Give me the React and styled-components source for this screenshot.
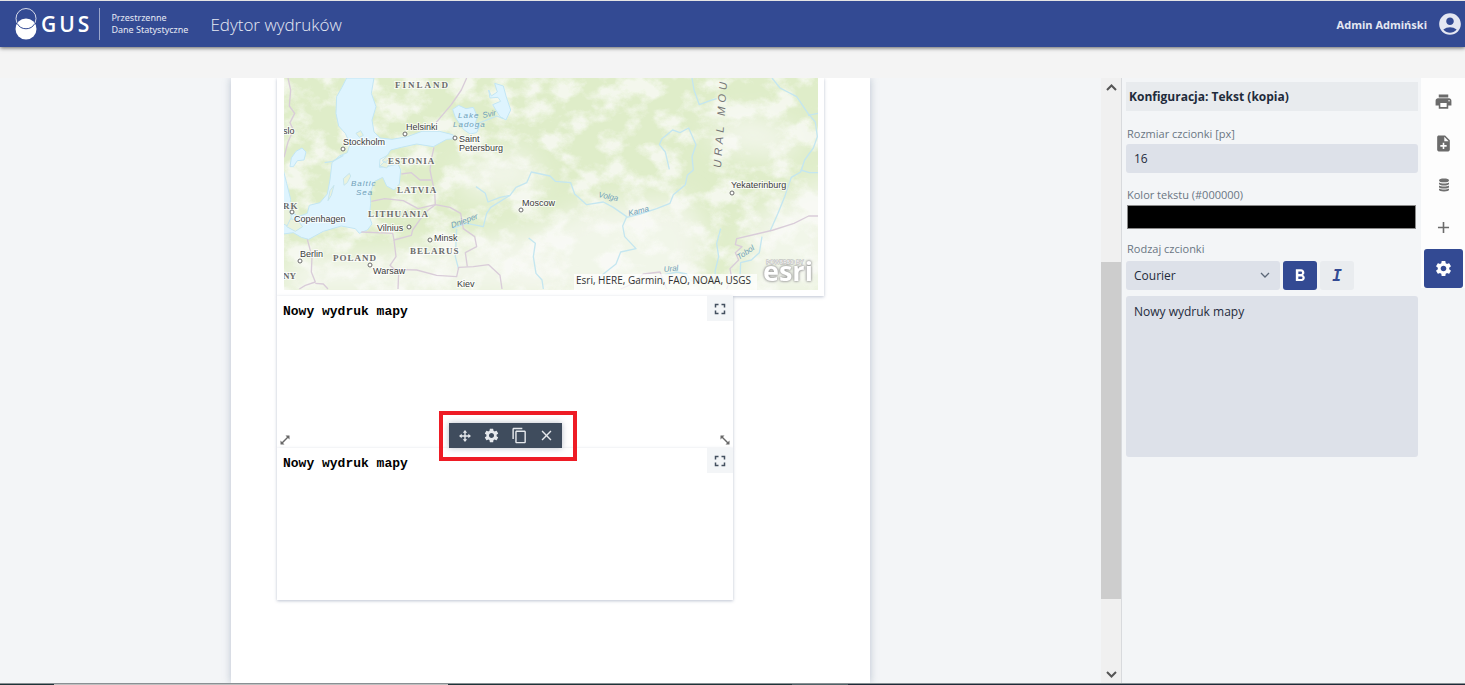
import { useState } from 'react';
import styled, { createGlobalStyle, css } from 'styled-components';
import {
	MdAccountCircle,
	MdAdd,
	MdClose,
	MdContentCopy,
	MdFormatBold,
	MdFormatItalic,
	MdFullscreen,
	MdNoteAdd,
	MdPrint,
	MdSettings,
} from 'react-icons/md';

const WATER = [
	// Gulf of Bothnia and the Baltic
	'M230 24 L216 52 L200 80 L198 130 L206 168 L226 190 L240 222 L232 248 L208 258 L186 278 L180 330 L172 372 L150 398 L118 406 L112 430 L84 440 L60 420 L62 388 L50 340 L40 300 L40 492 L70 488 L94 502 L116 508 L160 484 L214 468 L256 476 L268 490 L292 480 L306 462 L298 440 L302 400 L300 368 L314 334 L338 322 L350 348 L372 360 L388 342 L392 300 L384 282 L350 290 L328 292 L330 268 L352 256 L362 240 L394 232 L440 222 L490 230 L530 208 L556 206 L548 194 L508 184 L456 184 L412 200 L366 208 L330 204 L312 186 L306 150 L318 110 L304 70 L312 24 Z',
	// Ladoga
	'M548 118 L566 106 L588 116 L610 112 L622 140 L616 160 L630 166 L620 188 L600 192 L580 178 L556 142 Z',
	// Onega
	'M674 40 L700 48 L708 78 L722 120 L708 150 L690 140 L668 104 L692 94 L684 82 L660 84 L656 60 L664 78 L682 66 Z',
	'M60 290 L64 264 L78 244 L96 234 L108 246 L102 270 L82 272 L70 290 Z',
];

const LAND = [
	'M222 346 L220 326 L238 310 L242 318 L232 338 Z',
	'M174 392 L180 362 L192 346 L184 376 Z',
	'M40 400 L56 404 L64 440 L58 470 L40 462 Z',
	'M50 470 L62 446 L84 452 L98 470 L76 484 Z',
	'M330 288 L342 276 L358 282 L350 294 Z',
	'M258 190 L272 182 L280 196 L268 202 Z',
	'M336 272 L350 260 L358 268 L346 276 Z',
];

const RIVERS = [
	'M618 350 L646 370 L654 396 L690 382 L720 376 L738 352 L770 338 L784 306 L840 318 L856 334 L902 338 L914 372 L950 404 L1000 396 L1030 412 L1070 440 L1058 468 L1064 500 L1098 536 L1052 546 L1038 582 L1000 612 L980 640',
	'M1070 442 L1110 432 L1160 416 L1200 400 L1210 374 L1246 344 L1252 316 L1270 300 L1266 260 L1278 224 L1256 174 L1230 188 L1208 180 L1176 206 L1168 224 L1186 246 L1198 298',
	'M548 474 L590 460 L640 470 L650 430 L662 412 L720 376',
	'M560 476 L556 560 L566 598',
	'M620 162 L660 146 L680 138 L700 146',
	'M776 504 L796 520 L790 560 L798 610 L816 630 L820 657',
	'M1266 24 L1272 60 L1288 104 L1320 92 L1340 86',
	'M1506 24 L1530 54 L1580 80 L1614 130 L1636 156 L1642 200 L1630 234 L1604 270 L1592 306 L1564 322 L1544 380 L1524 430 L1500 484',
	'M1614 136 L1644 130',
	'M1592 300 L1618 308 L1644 308',
	'M1476 500 L1468 548 L1444 570 L1412 578 L1410 620',
	'M1352 476 L1340 520 L1346 560 L1336 600 L1334 657',
	'M1184 614 L1220 606 L1250 612 L1260 630 L1290 640',
	'M164 278 L188 274 L220 256',
];

const BORDERS = [
	'M54 24 L62 60 L58 108 L74 130 L60 158 L70 180 L54 216 L42 262',
	'M590 24 L574 60 L544 104 L498 158',
	'M492 232 L484 268 L480 300 L486 330 L494 366 L496 404',
	'M394 312 L424 308 L450 330 L484 330',
	'M304 394 L344 386 L400 392 L444 416 L496 404 L540 412 L572 430 L580 476 L614 500 L620 530 L586 548 L592 590',
	'M496 404 L470 424 L452 446 L428 480 L424 496 L372 510 L368 490 L274 486',
	'M372 510 L378 560 L360 586 L386 610 L384 657',
	'M364 598 L440 600 L500 616 L560 620 L566 592 L610 590 L656 584 L690 616 L696 657',
	'M112 508 L126 560 L124 606 L136 636 L106 646 L88 657',
	'M136 640 L160 642 L174 657',
	'M1644 438 L1616 438 L1572 460 L1510 480 L1460 492 L1400 506 L1396 524 L1416 530 L1396 548 L1406 570 L1380 596 L1384 620 L1370 657',
	'M1052 657 L1090 640 L1120 612 L1170 606 L1190 657',
];

const COUNTRIES = [
	{ x: 111, y: 10, name: 'FINLAND', spacing: 2 },
	{ x: 104, y: 86, name: 'ESTONIA', spacing: 1 },
	{ x: 113, y: 115, name: 'LATVIA', spacing: 1 },
	{ x: 84, y: 139, name: 'LITHUANIA', spacing: 1 },
	{ x: 126, y: 176, name: 'BELARUS', spacing: 1 },
	{ x: 49, y: 183, name: 'POLAND', spacing: 1 },
	{ x: -1, y: 131, name: 'RK', spacing: 1 },
	{ x: -1, y: 201, name: 'NY', spacing: 0 },
];

const CITIES = [
	{ x: 122, y: 52, cx: 121, cy: 56, name: 'Helsinki' },
	{ x: 59, y: 67, cx: 59, cy: 71, name: 'Stockholm' },
	{ x: 175, y: 64, cx: 171, cy: 60, name: 'Saint' },
	{ x: 175, y: 73, name: 'Petersburg' },
	{ x: -1, y: 56, name: 'slo' },
	{ x: 10, y: 144, cx: 8, cy: 134, name: 'Copenhagen' },
	{ x: 93, y: 153, cx: 125, cy: 149, name: 'Vilnius' },
	{ x: 150, y: 163, cx: 146, cy: 162, name: 'Minsk' },
	{ x: 16, y: 179, cx: 16, cy: 183, name: 'Berlin' },
	{ x: 89, y: 196, cx: 86, cy: 187, name: 'Warsaw' },
	{ x: 173, y: 209, name: 'Kiev' },
	{ x: 238, y: 128, cx: 237, cy: 132, name: 'Moscow' },
	{ x: 447, y: 110, cx: 448, cy: 115, name: 'Yekaterinburg' },
];

const WATERS = [
	{ x: 174, y: 40, name: 'Lake', spacing: 1 },
	{ x: 169, y: 49, name: 'Ladoga', spacing: 1 },
	{ x: 199, y: 40, name: 'Svir', angle: -12 },
	{ x: 67, y: 108, name: 'Baltic', spacing: 1 },
	{ x: 72, y: 117, name: 'Sea', spacing: 1 },
	{ x: 168, y: 150, name: 'Dnieper', angle: -20 },
	{ x: 314, y: 119, name: 'Volga', angle: 12 },
	{ x: 345, y: 138, name: 'Kama', angle: -14 },
	{ x: 380, y: 194, name: 'Ural', angle: -6 },
	{ x: 455, y: 182, name: 'Tobol', angle: -34 },
];

const MapView = () => (
	<MapSvg viewBox='0 0 534 212' preserveAspectRatio='xMidYMid slice' role='img' aria-label='Mapa'>
		<defs>
			<filter id='terrain' x='0' y='0' width='100%' height='100%'>
				<feTurbulence type='fractalNoise' baseFrequency='0.035 0.045' numOctaves='6' seed='21' />
				<feColorMatrix values='0 0 0 0 0.965  0 0 0 0 0.968  0 0 0 0 0.945  4 0 0 0 -1.75' />
			</filter>
			<filter id='soften' x='-20%' y='-20%' width='140%' height='140%'>
				<feGaussianBlur stdDeviation='12' />
			</filter>
		</defs>
		<rect width='534' height='212' fill='#dfedc9' />
		<g fill='#f6f7f1' fillOpacity='0.8' filter='url(#soften)'>
			<path d='M230 220 L250 150 L310 125 L400 120 L425 160 L405 220 Z' />
			<path d='M450 220 L470 140 L550 95 L550 220 Z' />
			<path d='M-10 220 L10 176 L100 175 L180 165 L240 150 L270 220 Z' />
			<path d='M420 50 L470 35 L520 60 L500 80 L440 72 Z' />
			<path d='M170 90 L240 70 L260 110 L190 120 Z' />
		</g>
		<rect width='534' height='212' filter='url(#terrain)' opacity='0.75' />
		<g transform='translate(-14 -8) scale(0.33333)' strokeLinejoin='round' fill='none'>
			{WATER.map(d => (
				<path key={d} d={d} fill='#def4fe' stroke='#c3e6f4' strokeWidth='3' />
			))}
			{LAND.map(d => (
				<path key={d} d={d} fill='#eaf2dc' stroke='#c6e5ee' strokeWidth='3' />
			))}
			{RIVERS.map(d => (
				<path key={d} d={d} stroke='#c4e6f0' strokeWidth='4' />
			))}
			{BORDERS.map(d => (
				<path key={d} d={d} stroke='#d9ccd9' strokeWidth='4' />
			))}
		</g>
		{COUNTRIES.map(({ name, x, y, spacing }) => (
			<CountryLabel key={name} x={x} y={y} $spacing={spacing}>
				{name}
			</CountryLabel>
		))}
		{WATERS.map(({ name, x, y, angle = 0, spacing = 0 }) => (
			<WaterLabel
				key={name}
				x={x}
				y={y}
				transform={`rotate(${angle} ${x} ${y})`}
				$spacing={spacing}
			>
				{name}
			</WaterLabel>
		))}
		{CITIES.map(({ name, x, y, cx, cy }) => (
			<g key={name}>
				{cx && <circle cx={cx} cy={cy} r='2' fill='#fff' stroke='#6b6b6b' />}
				<CityLabel x={x} y={y}>
					{name}
				</CityLabel>
			</g>
		))}
		<RangeLabel x='437' y='90' transform='rotate(-86 437 90)'>
			URAL MOU
		</RangeLabel>
		<rect x='290' y='196' width='183' height='16' fill='#fff' fillOpacity='0.7' />
		<Credits x='292' y='206'>
			Esri, HERE, Garmin, FAO, NOAA, USGS
		</Credits>
		<PoweredBy x='482' y='186'>
			POWERED BY
		</PoweredBy>
		<EsriLogo x='479' y='203'>
			esri
		</EsriLogo>
	</MapSvg>
);

const Logo = () => (
	<LogoSvg viewBox='0 0 22 32' aria-hidden='true'>
		<circle cx='11' cy='21' r='10.500' fill='#fff' />
		<circle cx='11' cy='10.500' r='10' fill='none' stroke='#fff' strokeWidth='.8' />
		<path d='M2.200 15.500A10 10 0 0 0 19.800 15.500' fill='none' stroke='#334a93' />
	</LogoSvg>
);

const MoveIcon = () => (
	<svg viewBox='0 0 14 14' width='14' height='14' fill='currentColor'>
		<path d='M6.300 3h1.400v8H6.300zM3 6.300h8v1.400H3z' />
		<path d='M7 1 9.200 3.700H4.800ZM7 13 9.200 10.300H4.800ZM1 7 3.700 4.800v4.400ZM13 7 10.300 4.800v4.400Z' />
	</svg>
);

const DatabaseIcon = () => (
	<svg viewBox='0 0 12 14' width='12' height='14' fill='#707070'>
		<path d='M1 2.4C1 1 3 .5 6 .5s5 .5 5 1.9S9 4.2 6 4.2 1 3.8 1 2.4Z' />
		<path d='M1 4.4c1 .8 3 1 5 1s4-.2 5-1v1.4C11 7 9 7.6 6 7.6S1 7 1 5.8Z' />
		<path d='M1 7.5c1 .8 3 1 5 1s4-.2 5-1v1.4c0 1.2-2 1.7-5 1.7S1 10.1 1 8.9Z' />
		<path d='M1 10.5c1 .8 3 1 5 1s4-.2 5-1v1.2c0 1.2-2 1.7-5 1.7s-5-.5-5-1.7Z' />
	</svg>
);

const ResizeIcon = ({ flip }) => (
	<svg viewBox='0 0 12 12' width='12' height='12' fill='#686868'>
		<path
			d='M1.500 6.500 3 8 8 3 6.500 1.500H10.500v4L9 4 4 9 5.500 10.500h-4Z'
			transform={flip ? 'matrix(-1 0 0 1 12 0)' : undefined}
		/>
	</svg>
);

const ScrollArrow = ({ down }) => (
	<svg viewBox='0 0 20 18' width='20' height='18' fill='none' stroke='#555' strokeWidth='2'>
		<path d={down ? 'M6 7l4.500 4.500L15 7' : 'M6 12l4.500-4.500L15 12'} />
	</svg>
);

const TextBlock = ({ text, bold, italic, children }) => (
	<TextCard>
		<CardText $bold={bold} $italic={italic}>
			{text}
		</CardText>
		<ExpandButton aria-label='Powiększ'>
			<MdFullscreen size={18} />
		</ExpandButton>
		{children}
	</TextCard>
);

const App = () => {
	const [config, setConfig] = useState({
		size: '16',
		color: '#000000',
		font: 'Courier',
		text: 'Nowy wydruk mapy',
	});
	const [bold, setBold] = useState(true);
	const [italic, setItalic] = useState(false);

	const onChange = e => {
		const { name, value } = e.target;
		setConfig({ ...config, [name]: value });
	};

	return (
		<Screen>
			<GlobalStyle />
			<Header>
				<Brand href='#'>
					<Logo />
					<BrandName>GUS</BrandName>
					<BrandText>
						Przestrzenne
						<br />
						Dane Statystyczne
					</BrandText>
				</Brand>
				<AppTitle>Edytor wydruków</AppTitle>
				<UserButton>
					Admin Admiński
					<MdAccountCircle size={26} />
				</UserButton>
			</Header>

			<Main>
				<Workspace>
					<Paper>
						<MapCard>
							<MapView />
						</MapCard>
						<TextBlock text='Nowy wydruk mapy' bold>
							<Handle $side='left' aria-label='Zmień rozmiar z lewej'>
								<ResizeIcon />
							</Handle>
							<Handle $side='right' aria-label='Zmień rozmiar z prawej'>
								<ResizeIcon flip />
							</Handle>
							<Highlight>
								<Toolbar>
									<ToolButton aria-label='Przesuń'>
										<MoveIcon />
									</ToolButton>
									<ToolButton aria-label='Konfiguracja'>
										<MdSettings size={17} />
									</ToolButton>
									<ToolButton aria-label='Kopiuj'>
										<MdContentCopy size={17} />
									</ToolButton>
									<ToolButton aria-label='Usuń'>
										<MdClose size={17} />
									</ToolButton>
								</Toolbar>
							</Highlight>
						</TextBlock>
						<TextBlock text={config.text} bold={bold} italic={italic} />
					</Paper>
				</Workspace>

				<Scrollbar>
					<ScrollArrow />
					<Track>
						<Thumb />
					</Track>
					<ScrollArrow down />
				</Scrollbar>

				<Panel>
					<PanelTitle>Konfiguracja: Tekst (kopia)</PanelTitle>
					<Label htmlFor='size'>Rozmiar czcionki [px]</Label>
					<Input id='size' name='size' type='text' value={config.size} onChange={onChange} />
					<Label htmlFor='color'>Kolor tekstu ({config.color})</Label>
					<ColorInput
						id='color'
						name='color'
						type='color'
						value={config.color}
						onChange={onChange}
					/>
					<Label htmlFor='font'>Rodzaj czcionki</Label>
					<FontRow>
						<SelectBox>
							<Select id='font' name='font' value={config.font} onChange={onChange}>
								<option>Courier</option>
								<option>Arial</option>
								<option>Times</option>
							</Select>
							<svg viewBox='0 0 10 6' width='10' height='6' fill='none' stroke='#5b6777'>
								<path d='M1 1l4 4 4-4' strokeWidth='1.3' />
							</svg>
						</SelectBox>
						<StyleButton $active={bold} onClick={() => setBold(!bold)} aria-label='Pogrubienie'>
							<MdFormatBold size={20} />
						</StyleButton>
						<StyleButton $active={italic} onClick={() => setItalic(!italic)} aria-label='Kursywa'>
							<ItalicMark>I</ItalicMark>
						</StyleButton>
					</FontRow>
					<TextArea name='text' aria-label='Tekst' value={config.text} onChange={onChange} />
				</Panel>

				<Rail>
					<RailButton aria-label='Drukuj'>
						<MdPrint size={19} />
					</RailButton>
					<RailButton aria-label='Nowy wydruk'>
						<MdNoteAdd size={19} />
					</RailButton>
					<RailButton aria-label='Dane'>
						<DatabaseIcon />
					</RailButton>
					<RailButton aria-label='Dodaj'>
						<MdAdd size={19} />
					</RailButton>
					<RailButton $active aria-label='Ustawienia'>
						<MdSettings size={19} />
					</RailButton>
				</Rail>
			</Main>
			<BottomEdge />
		</Screen>
	);
};

export default App;

const GlobalStyle = createGlobalStyle`
	* {
		box-sizing: border-box;
	}
	body {
		margin: 0;
		font-family: 'Open Sans', 'Noto Sans', sans-serif;
		color: #1f2b3b;
	}
	button, input, select, textarea {
		font-family: inherit;
		color: inherit;
	}
	button {
		display: flex;
		align-items: center;
		justify-content: center;
		padding: 0;
		border: none;
		background: none;
		cursor: pointer;
	}
`;

const Screen = styled.div`
	display: flex;
	flex-direction: column;
	height: 100vh;
	overflow: hidden;
	background-color: #f4f4f4;
`;

const Header = styled.header`
	display: flex;
	align-items: center;
	flex-shrink: 0;
	height: 47px;
	padding: 0 2px 0 15px;
	border-top: 1px solid #e4e4e4;
	background-color: #334a93;
	color: #fff;
	box-shadow: 0 1px 4px rgba(0, 0, 0, 0.6);
`;

const Brand = styled.a`
	display: flex;
	align-items: center;
	color: #fff;
	text-decoration: none;
`;

const LogoSvg = styled.svg`
	width: 22px;
	height: 32px;
`;

const BrandName = styled.span`
	margin-left: 4px;
	font-size: 21px;
	font-weight: 600;
	letter-spacing: 3px;
`;

const BrandText = styled.span`
	margin-left: 7px;
	padding: 4px 0 4px 11px;
	border-left: 1px solid #9aa6cb;
	font-family: 'Noto Sans', sans-serif;
	font-size: 9px;
	line-height: 12px;
	color: #e6e9f3;
`;

const AppTitle = styled.h1`
	margin: 0 0 0 22px;
	font-size: 17px;
	font-weight: 300;
	color: #e6e9f3;
`;

const UserButton = styled.button`
	gap: 10px;
	margin-left: auto;
	font-size: 11px;
	font-weight: 700;
	&& {
		color: #e4e7f2;
	}
`;

const Main = styled.main`
	display: flex;
	flex: 1;
	min-height: 0;
	margin-top: 31px;
	background-color: #f3f5f7;
`;

const Workspace = styled.section`
	display: flex;
	flex: 1;
	justify-content: center;
	min-width: 0;
	overflow: hidden;
`;

const Paper = styled.div`
	width: 639px;
	padding: 0 46px;
	background-color: #fff;
	box-shadow: 0 0 8px rgba(100, 120, 150, 0.4);
`;

const MapCard = styled.div`
	padding: 0 6px 6px 7px;
	background-color: #fff;
	box-shadow: 0 1px 3px rgba(90, 105, 140, 0.4);
`;

const MapSvg = styled.svg`
	display: block;
	width: 100%;
	height: 212px;
`;

const mapHalo = css`
	paint-order: stroke;
	stroke: rgba(255, 255, 255, 0.7);
	stroke-width: 2px;
`;

const CountryLabel = styled.text`
	${mapHalo}
	font-family: 'Liberation Serif', serif;
	font-size: 9px;
	font-weight: 700;
	letter-spacing: ${({ $spacing }) => $spacing}px;
	fill: #6c6c6c;
`;

const CityLabel = styled.text`
	${mapHalo}
	font-family: 'Liberation Sans', sans-serif;
	font-size: 9px;
	fill: #3c3c3c;
`;

const WaterLabel = styled.text`
	font-family: 'Liberation Sans', sans-serif;
	font-size: 8px;
	font-style: italic;
	letter-spacing: ${({ $spacing }) => $spacing}px;
	fill: #6f9fb8;
`;

const RangeLabel = styled.text`
	font-family: 'Liberation Sans', sans-serif;
	font-size: 11px;
	font-style: italic;
	letter-spacing: 4px;
	fill: #777;
`;

const Credits = styled.text`
	font-size: 10px;
	fill: #323232;
`;

const PoweredBy = styled.text`
	font-size: 6px;
	fill: #fff;
	paint-order: stroke;
	stroke: #b4b4b4;
	stroke-width: 1px;
`;

const EsriLogo = styled.text`
	font-size: 27px;
	font-weight: 700;
	fill: #fff;
	filter: drop-shadow(0 0 1px #999) drop-shadow(0 0 1px #aaa);
`;

const TextCard = styled.div`
	position: relative;
	display: flex;
	align-items: flex-start;
	justify-content: space-between;
	width: 456px;
	height: 152px;
	background-color: #fff;
	box-shadow: 0 1px 3px rgba(90, 105, 140, 0.4);
`;

const CardText = styled.p`
	margin: 0;
	padding: 7px 6px;
	font-family: 'Liberation Mono', monospace;
	font-size: 13px;
	line-height: 18px;
	font-weight: ${({ $bold }) => ($bold ? 700 : 400)};
	font-style: ${({ $italic }) => ($italic ? 'italic' : 'normal')};
	color: #000;
`;

const ExpandButton = styled.button`
	width: 26px;
	height: 25px;
	&& {
		background-color: #f3f5f7;
		color: #44505f;
	}
`;

const Handle = styled.button`
	position: absolute;
	bottom: 2px;
	${({ $side }) => $side}: 2px;
`;

const Highlight = styled.div`
	position: absolute;
	z-index: 1;
	left: 162px;
	bottom: -13px;
	padding: 8px 11px 9px 6px;
	border: 4px solid #ee1c25;
`;

const Toolbar = styled.div`
	display: flex;
	width: 113px;
	height: 25px;
	padding: 0 2px;
	background-color: #3f4c5d;
	box-shadow: 0 0 6px rgba(80, 95, 120, 0.4);
`;

const ToolButton = styled.button`
	flex: 1;
	&& {
		color: #e6e9ed;
	}
`;

const Scrollbar = styled.div`
	display: flex;
	flex-direction: column;
	width: 21px;
	border-right: 1px solid #d8dadd;
	background-color: #f0f0f0;
`;

const Track = styled.div`
	display: flex;
	flex: 1;
	flex-direction: column;
	justify-content: flex-end;
	padding-bottom: 66px;
`;

const Thumb = styled.div`
	height: 67%;
	background-color: #cdcdcd;
`;

const Panel = styled.aside`
	display: flex;
	flex-direction: column;
	width: 299px;
	padding: 4px 3px 0 4px;
`;

const PanelTitle = styled.h2`
	margin: 0 0 14px;
	padding: 0 3px;
	background-color: #e8ebee;
	font-size: 12px;
	line-height: 29px;
	font-weight: 700;
`;

const Label = styled.label`
	padding: 0 0 1px 1px;
	font-size: 11px;
	line-height: 18px;
	color: #6a7583;
`;

const Input = styled.input`
	height: 29px;
	margin-bottom: 13px;
	padding: 0 8px;
	border: none;
	border-radius: 3px;
	background-color: #dde1e9;
	font-size: 12px;
	outline: none;
`;

const ColorInput = styled.input`
	width: auto;
	height: 24px;
	margin: 0 2px 11px 1px;
	padding: 0;
	border: 1px solid #8a8a8a;
	background: none;
	cursor: pointer;
	&::-webkit-color-swatch-wrapper {
		padding: 0;
	}
	&::-webkit-color-swatch {
		border: none;
	}
`;

const FontRow = styled.div`
	display: flex;
	gap: 3px;
	margin: 2px 0 6px;
`;

const SelectBox = styled.div`
	position: relative;
	width: 154px;
	svg {
		position: absolute;
		top: 11px;
		right: 10px;
		pointer-events: none;
	}
`;

const Select = styled.select`
	appearance: none;
	width: 100%;
	height: 29px;
	padding: 0 8px;
	border: none;
	border-radius: 3px;
	background-color: #dde1e9;
	font-size: 12px;
`;

const StyleButton = styled.button`
	width: 34px;
	height: 29px;
	border-radius: 3px;
	&& {
		background-color: ${({ $active }) => ($active ? '#334a93' : '#e9ecef')};
		color: ${({ $active }) => ($active ? '#fff' : '#334a93')};
	}
`;

const ItalicMark = styled.span`
	font-family: 'DejaVu Sans Mono', monospace;
	font-size: 16px;
	font-style: italic;
	font-weight: 700;
`;

const TextArea = styled.textarea`
	height: 161px;
	padding: 7px 8px;
	border: none;
	border-radius: 3px;
	background-color: #dde1e9;
	font-size: 12px;
	line-height: 18px;
	resize: none;
	outline: none;
`;

const Rail = styled.nav`
	display: flex;
	flex-direction: column;
	align-self: flex-start;
	width: 44px;
	padding: 2px 2px 0 3px;
	background-color: #fdfdfd;
`;

const RailButton = styled.button`
	height: 42px;
	&& {
		color: #6b6b6b;
	}
	${({ $active }) =>
		$active &&
		css`
			height: 39px;
			margin-top: 1px;
			border-radius: 3px;
			&&& {
				background-color: #334a93;
				color: #fff;
			}
		`}
`;

const BottomEdge = styled.div`
	flex-shrink: 0;
	height: 2px;
	border-top: 1px solid #8a9094;
	background: linear-gradient(
		to right,
		#1d3438 0 54px,
		#bfbfbf 54px 448px,
		#1d3438 448px 792px,
		#4e6266 792px 848px,
		#1d2b38 848px
	);
`;
